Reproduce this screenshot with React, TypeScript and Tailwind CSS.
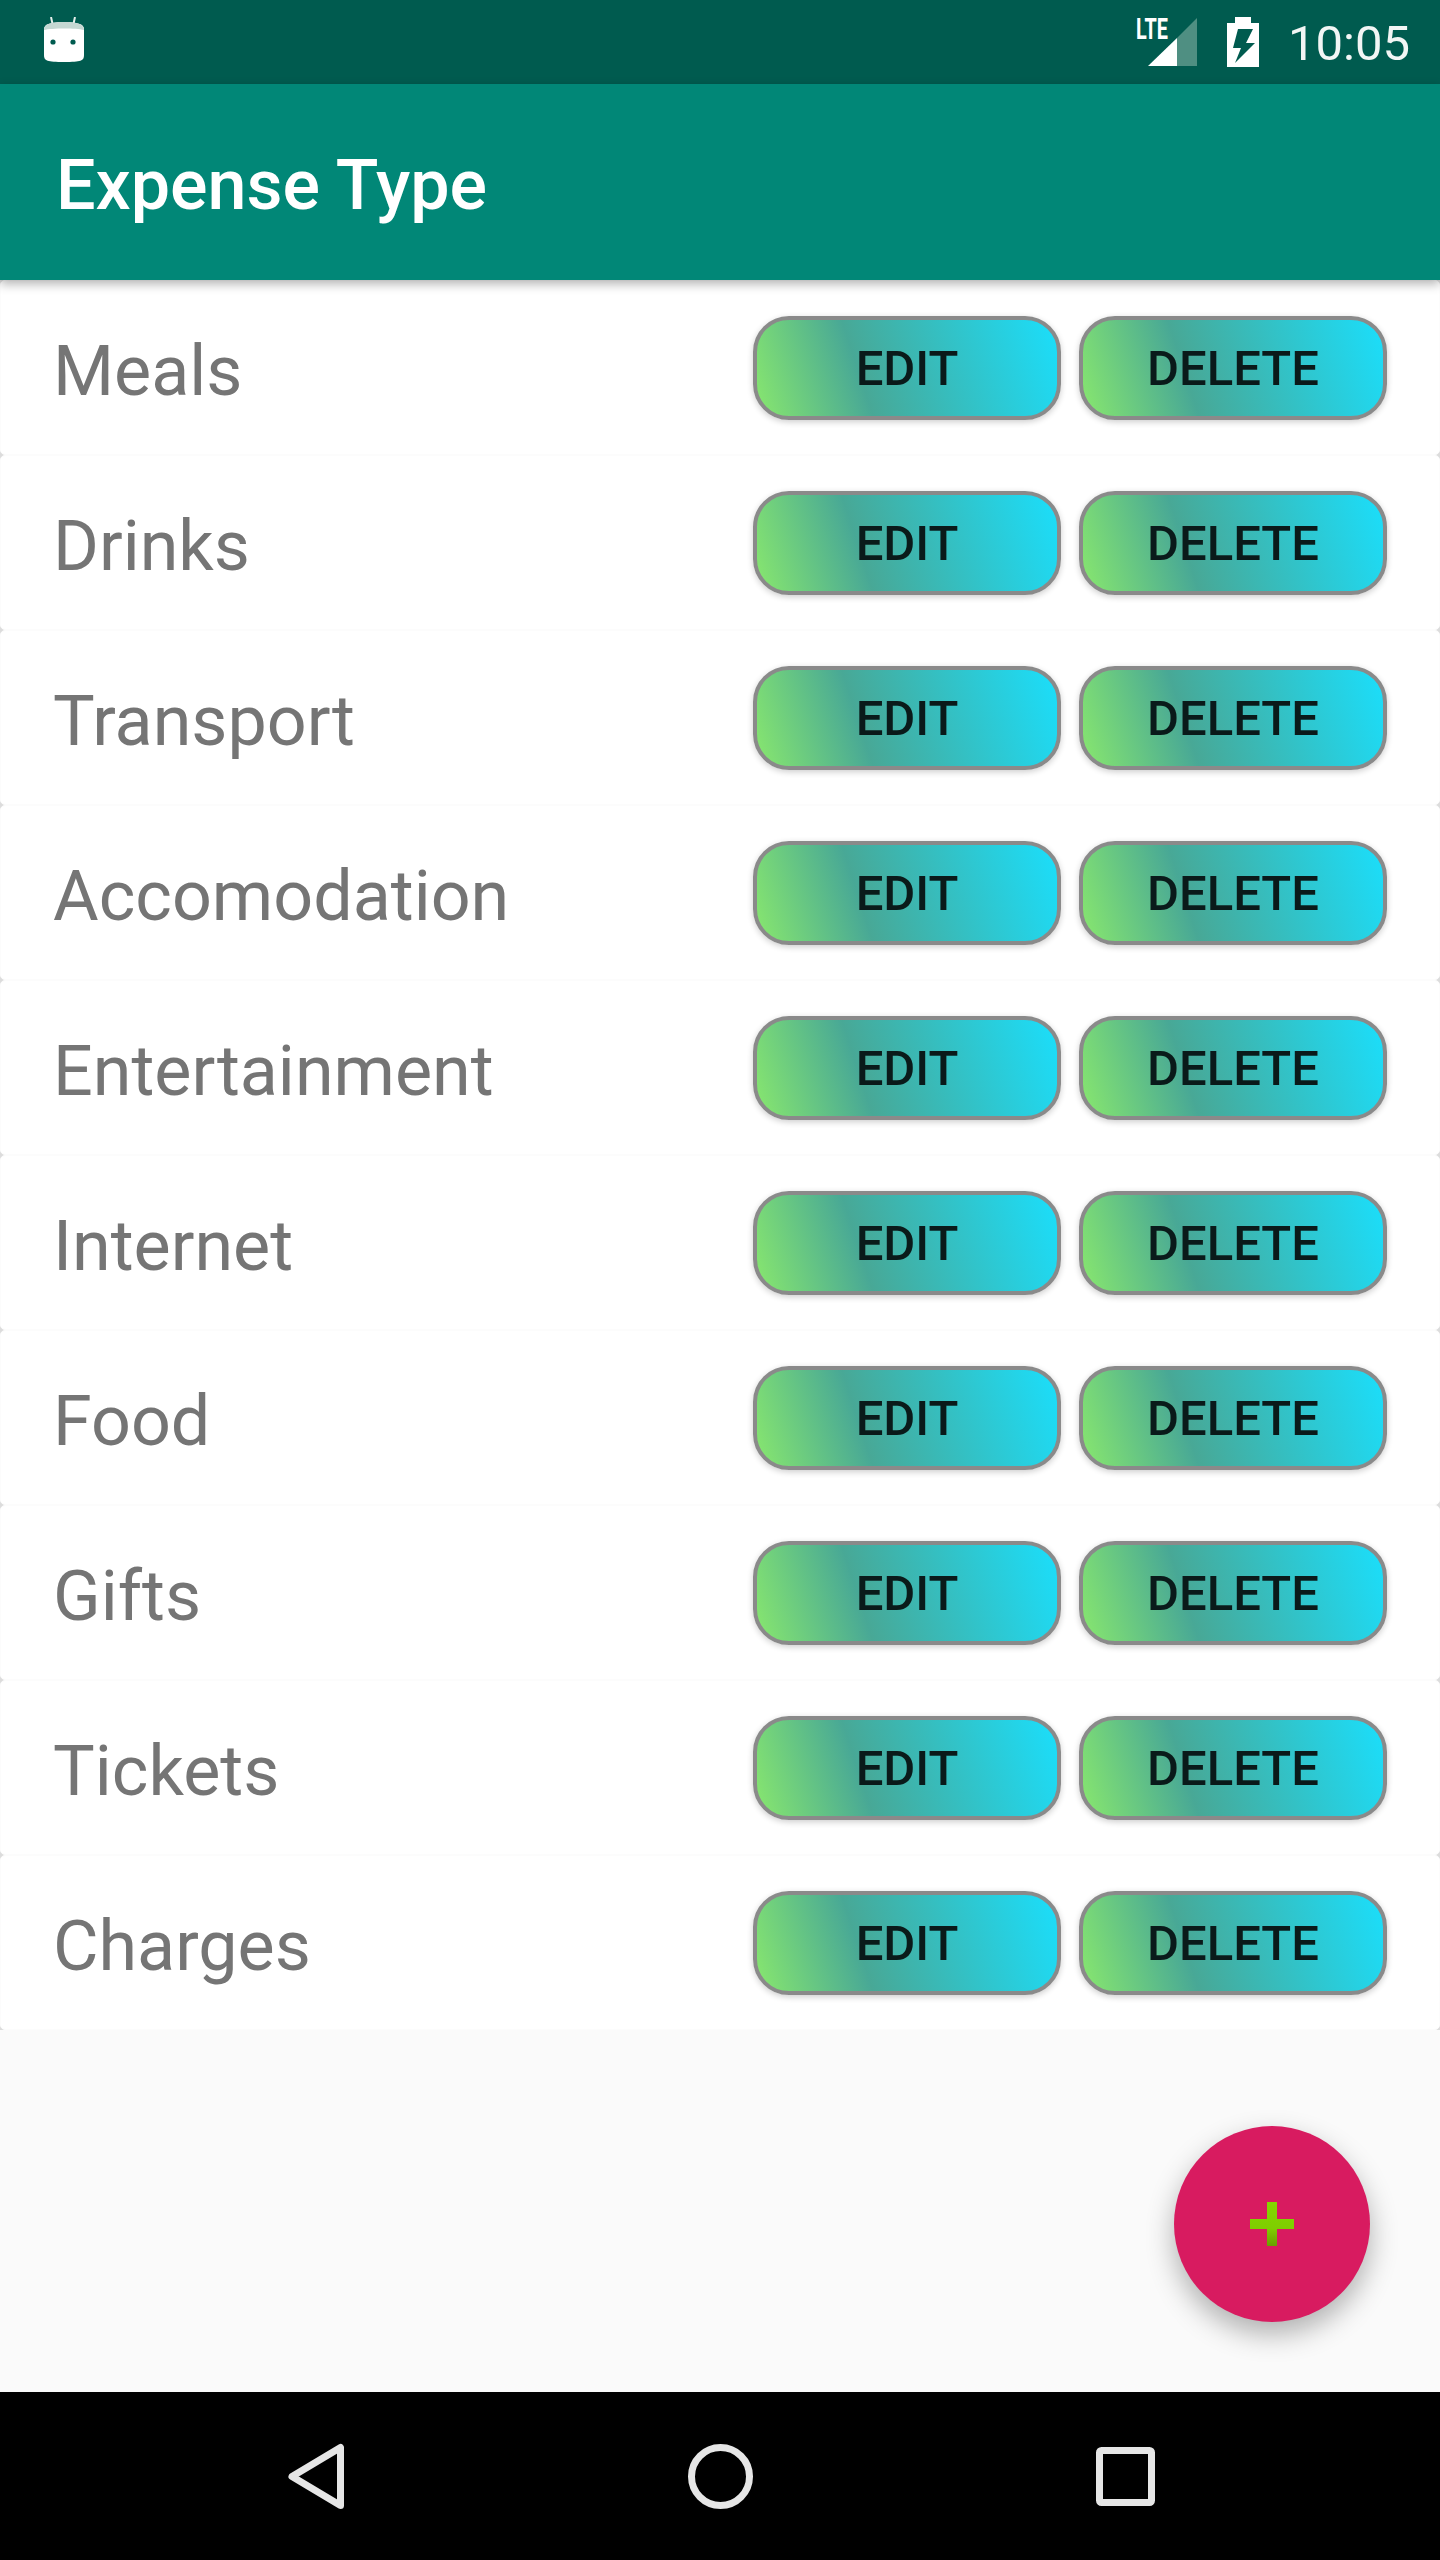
const expenseTypes = [
  "Meals",
  "Drinks",
  "Transport",
  "Accomodation",
  "Entertainment",
  "Internet",
  "Food",
  "Gifts",
  "Tickets",
  "Charges",
];

function RowButton({ label }: { label: string }) {
  return (
    <button className="flex h-[104px] w-[308px] items-center justify-center rounded-[36px] border-[4px] border-[#8a8a8a] bg-[linear-gradient(72deg,#88e76e_0%,#48a896_35%,#1bdefb_100%)] pt-[2px] font-['Roboto',sans-serif] text-[49px] font-medium text-[#0a1a1a] shadow-[0_2px_6px_rgba(0,0,0,0.2)]">
      {label}
    </button>
  );
}

function StatusBar() {
  return (
    <div className="flex h-[84px] shrink-0 items-center justify-between bg-[#005b4f] pl-[43px] pr-[30px]">
      <svg width="42" height="50" viewBox="0 0 42 50">
        <path d="M8 0 L10 9 M32 0 L30 9" stroke="#e6efec" strokeWidth="2" />
        <path d="M1 12 C1 7 8 5 21 5 C34 5 41 7 41 12 L41 38 C41 44 38 45 21 45 C4 45 1 44 1 38 Z" fill="#fff" />
        <path d="M1 13 C1 7 8 5 21 5 C34 5 41 7 41 13 C33 11 9 11 1 13 Z" fill="#c5d8d3" />
        <circle cx="10" cy="25" r="2.6" fill="#005b4f" />
        <circle cx="30" cy="25" r="2.6" fill="#005b4f" />
      </svg>
      <div className="flex items-center">
        <div className="relative h-[50px] w-[62px]">
          <span className="absolute left-0 top-[-3px] origin-top-left scale-x-[0.66] font-['Roboto',sans-serif] text-[30px] font-bold leading-[30px] text-white">
            LTE
          </span>
          <svg className="absolute left-[12px] top-0" width="50" height="50" viewBox="0 0 50 50">
            <path d="M0 49 L29 21 L29 49 Z" fill="#fff" />
            <path d="M29 21 L49 1 L49 49 L29 49 Z" fill="#4f8f82" />
          </svg>
        </div>
        <svg className="ml-[29px]" width="32" height="50" viewBox="0 0 32 50">
          <path
            fillRule="evenodd"
            d="M8 0 H24 V6 H32 V50 H0 V6 H8 Z M11 12 H26 L19 26 H28 L8 46 L14 31 H6 Z"
            fill="#fff"
          />
        </svg>
        <span className="ml-[29px] pt-[3px] font-['Roboto',sans-serif] text-[49px] leading-none text-[#f2f6f5]">10:05</span>
      </div>
    </div>
  );
}

function NavBar() {
  return (
    <div className="flex h-[168px] shrink-0 items-center justify-center gap-[324px] bg-black">
      <svg width="80" height="70" viewBox="0 0 80 70">
        <path d="M64.5 6.5 V64.5 L16 35.5 Z" fill="none" stroke="#e6e6e6" strokeWidth="7" strokeLinejoin="round" />
      </svg>
      <svg width="80" height="70" viewBox="0 0 80 70">
        <circle cx="40.5" cy="35.5" r="29" fill="none" stroke="#e6e6e6" strokeWidth="7" />
      </svg>
      <svg width="80" height="70" viewBox="0 0 80 70">
        <rect x="15.5" y="9.5" width="52" height="52" rx="2" fill="none" stroke="#e6e6e6" strokeWidth="7" />
      </svg>
    </div>
  );
}

export default function App() {
  return (
    <div className="flex h-[2560px] w-[1440px] flex-col overflow-hidden bg-[#fafafa] font-['Roboto',sans-serif]">
      <StatusBar />
      <div className="relative z-10 flex h-[196px] shrink-0 items-center bg-[#018777] pl-[56px] pt-[6px] shadow-[0_4px_10px_rgba(0,0,0,0.3)]">
        <h1 className="text-[70px] font-medium leading-none text-white">Expense Type</h1>
      </div>
      <div className="relative flex-1">
        <div className="bg-[#dcdcdc]">
          {expenseTypes.map((name) => (
            <div
              key={name}
              className="flex h-[175px] items-center justify-between rounded-[5px] border border-[#fcfcfc] bg-white pl-[52px] pr-[52px]"
            >
              <span className="pt-[6px] text-[70px] leading-none text-[#757575]">{name}</span>
              <div className="flex gap-[18px]">
                <RowButton label="EDIT" />
                <RowButton label="DELETE" />
              </div>
            </div>
          ))}
        </div>
        <button className="absolute bottom-[70px] right-[70px] flex h-[196px] w-[196px] items-center justify-center rounded-full bg-[#d81b60] shadow-[0_12px_28px_rgba(0,0,0,0.3)]">
          <svg width="46" height="46" viewBox="0 0 46 46">
            <defs>
              <linearGradient id="plusFill" x1="0" y1="0" x2="0" y2="1">
                <stop offset="0" stopColor="#84d600" />
                <stop offset="0.6" stopColor="#7fce00" />
                <stop offset="1" stopColor="#6a9e00" />
              </linearGradient>
            </defs>
            <path d="M18 1 H28 V18 H45 V28 H28 V45 H18 V28 H1 V18 H18 Z" fill="url(#plusFill)" />
          </svg>
        </button>
      </div>
      <NavBar />
    </div>
  );
}
